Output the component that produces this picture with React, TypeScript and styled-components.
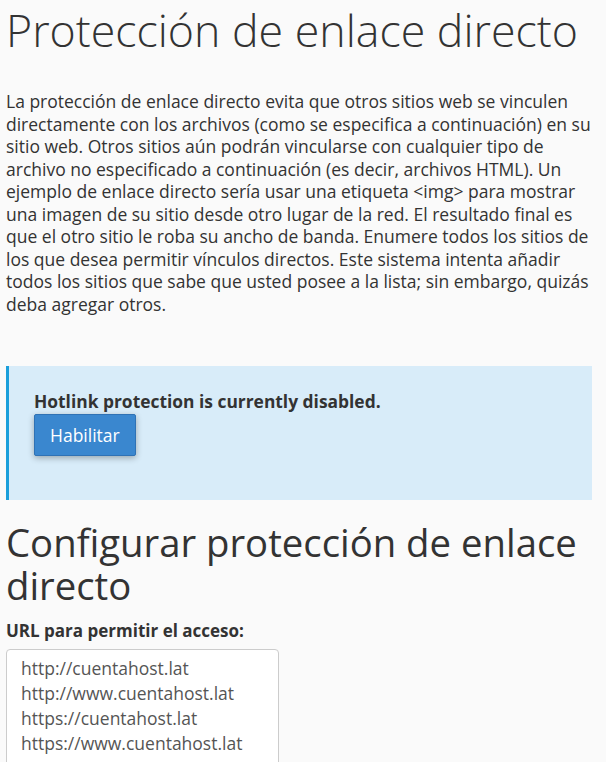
import React from 'react'
import styled, { createGlobalStyle } from 'styled-components'

const GlobalStyle = createGlobalStyle`
  html, body {
    margin: 0;
    padding: 0;
    background: #fafafa;
  }
  body {
    font-family: "Open Sans", "Noto Sans", sans-serif;
    color: #333;
    font-size: 17.5px;
  }
`

const Page = styled.main`
  padding: 0 14px 0 6px;
`

const Title = styled.h1`
  font-size: 44.7px;
  font-weight: 300;
  line-height: 49.5px;
  margin: 5px 0 0;
`

const Intro = styled.p`
  font-size: 17.5px;
  line-height: 22.5px;
  margin: 35.5px 0 0;
`

const Alert = styled.div`
  margin-top: 51px;
  background: #d8ecf9;
  border-left: 3px solid #1a9fdb;
  padding: 24px 25px 44px;
`

const AlertText = styled.div`
  font-weight: 700;
  font-size: 17.4px;
  line-height: 22.5px;
  margin-bottom: 1.5px;
`

const PrimaryButton = styled.button`
  display: block;
  font-family: inherit;
  font-size: 17.5px;
  color: #fff;
  background: #3a87cf;
  border: 1px solid #2f72b5;
  border-radius: 2px;
  height: 42px;
  padding: 0 15px;
  box-shadow: 0 2px 6px rgba(0, 0, 0, 0.3);
  cursor: pointer;
`

const SectionTitle = styled.h2`
  font-size: 38.3px;
  font-weight: 400;
  line-height: 43px;
  margin: 20.5px 0 0;
`

const Label = styled.label`
  display: block;
  font-weight: 700;
  font-size: 17px;
  line-height: 22.5px;
  margin-top: 13.5px;
`

const UrlList = styled.textarea`
  display: block;
  margin-top: 6.5px;
  width: 273px;
  height: 140px;
  box-sizing: border-box;
  font-family: inherit;
  font-size: 17.5px;
  line-height: 25px;
  color: #555;
  background: #fff;
  border: 1px solid #ccc;
  border-radius: 4px;
  padding: 6px 14px;
  resize: none;
  overflow: hidden;
`

const urls = [
  'http://cuentahost.lat',
  'http://www.cuentahost.lat',
  'https://cuentahost.lat',
  'https://www.cuentahost.lat',
]

export default function App() {
  return (
    <>
      <GlobalStyle />
      <Page>
        <Title>Protección de enlace directo</Title>
        <Intro>
          La protección de enlace directo evita que otros sitios web se vinculen directamente con los
          archivos (como se especifica a continuación) en su sitio web. Otros sitios aún podrán
          vincularse con cualquier tipo de archivo no especificado a continuación (es decir, archivos
          HTML). Un ejemplo de enlace directo sería usar una etiqueta &lt;img&gt; para mostrar una
          imagen de su sitio desde otro lugar de la red. El resultado final es que el otro sitio le
          roba su ancho de banda. Enumere todos los sitios de los que desea permitir vínculos
          directos. Este sistema intenta añadir todos los sitios que sabe que usted posee a la lista;
          sin embargo, quizás deba agregar otros.
        </Intro>
        <Alert>
          <AlertText>Hotlink protection is currently disabled.</AlertText>
          <PrimaryButton>Habilitar</PrimaryButton>
        </Alert>
        <SectionTitle>Configurar protección de enlace directo</SectionTitle>
        <Label htmlFor="urls">URL para permitir el acceso:</Label>
        <UrlList id="urls" defaultValue={urls.join('\n')} />
      </Page>
    </>
  )
}
